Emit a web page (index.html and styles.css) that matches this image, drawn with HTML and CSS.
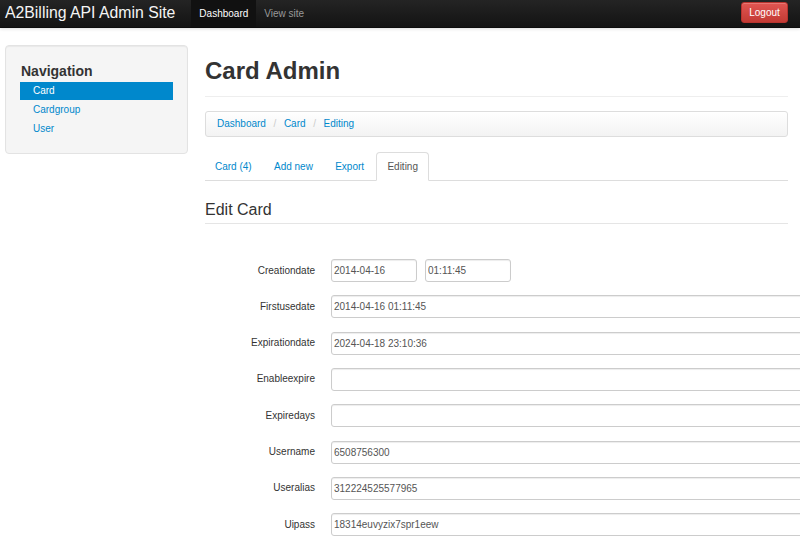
FILE: index.html
```html
<!DOCTYPE html>
<html lang="en">
<head>
<meta charset="utf-8">
<title>Card Admin - A2Billing API Admin Site</title>
<link rel="stylesheet" href="styles.css">
</head>
<body>
<div class="navbar">
  <a class="brand" href="#">A2Billing API Admin Site</a>
  <ul class="nav">
    <li class="active"><a href="#">Dashboard</a></li>
    <li><a href="#">View site</a></li>
  </ul>
  <a class="btn-danger" href="#">Logout</a>
</div>

<div class="container">
  <div class="sidebar">
    <div class="well">
      <h4 class="nav-header">Navigation</h4>
      <ul class="nav-list">
        <li class="active"><a href="#">Card</a></li>
        <li><a href="#">Cardgroup</a></li>
        <li><a href="#">User</a></li>
      </ul>
    </div>
  </div>

  <div class="main">
    <div class="page-header">
      <h1>Card Admin</h1>
    </div>

    <ul class="breadcrumb">
      <li><a href="#">Dashboard</a><span class="divider">/</span></li>
      <li><a href="#">Card</a><span class="divider">/</span></li>
      <li><a href="#">Editing</a></li>
    </ul>

    <ul class="nav-tabs">
      <li><a href="#">Card (4)</a></li>
      <li><a href="#">Add new</a></li>
      <li><a href="#">Export</a></li>
      <li class="active"><a href="#">Editing</a></li>
    </ul>

    <form class="form-horizontal">
      <h3 class="legend">Edit Card</h3>
      <div class="fields">
        <div class="control-group">
          <label class="control-label">Creationdate</label>
          <div class="controls">
            <input class="input input-small" type="text" value="2014-04-16">
            <input class="input input-small" type="text" value="01:11:45">
          </div>
        </div>
        <div class="control-group">
          <label class="control-label">Firstusedate</label>
          <div class="controls"><input class="input input-wide" type="text" value="2014-04-16 01:11:45"></div>
        </div>
        <div class="control-group">
          <label class="control-label">Expirationdate</label>
          <div class="controls"><input class="input input-wide" type="text" value="2024-04-18 23:10:36"></div>
        </div>
        <div class="control-group">
          <label class="control-label">Enableexpire</label>
          <div class="controls"><input class="input input-wide" type="text" value=""></div>
        </div>
        <div class="control-group">
          <label class="control-label">Expiredays</label>
          <div class="controls"><input class="input input-wide" type="text" value=""></div>
        </div>
        <div class="control-group">
          <label class="control-label">Username</label>
          <div class="controls"><input class="input input-wide" type="text" value="6508756300"></div>
        </div>
        <div class="control-group">
          <label class="control-label">Useralias</label>
          <div class="controls"><input class="input input-wide" type="text" value="312224525577965"></div>
        </div>
        <div class="control-group">
          <label class="control-label">Uipass</label>
          <div class="controls"><input class="input input-wide" type="text" value="18314euvyzix7spr1eew"></div>
        </div>
      </div>
    </form>
  </div>
</div>
</body>
</html>
```

FILE: styles.css
```css
html, body {
  margin: 0;
  padding: 0;
  overflow-x: hidden;
}
body {
  font-family: "Liberation Sans", Arial, sans-serif;
  font-size: 10px;
  line-height: 14px;
  color: #333333;
  background: #ffffff;
}
a {
  color: #0088cc;
  text-decoration: none;
}
ul {
  list-style: none;
  margin: 0;
  padding: 0;
}

/* navbar */
.navbar {
  display: flex;
  align-items: flex-start;
  height: 28px;
  background: linear-gradient(#242424, #131313);
  border-bottom: 1px solid #0c0c0c;
  box-shadow: 0 1px 3px rgba(0,0,0,0.15);
  box-sizing: border-box;
}
.brand {
  color: #f4f4f4;
  font-size: 15.8px;
  line-height: 25px;
  padding-left: 5px;
  white-space: nowrap;
}
.nav {
  display: flex;
  margin-left: 16px;
}
.nav li a {
  display: block;
  padding: 0 8px;
  line-height: 27px;
  color: #999999;
}
.nav li.active a {
  color: #ffffff;
  background: #111111;
}
.btn-danger {
  margin-left: auto;
  margin-right: 12px;
  margin-top: 2px;
  width: 47px;
  height: 21px;
  line-height: 19px;
  text-align: center;
  box-sizing: border-box;
  font-size: 10px;
  color: #ffffff;
  background: linear-gradient(#e15652, #c33a34);
  border: 1px solid #b8332e;
  border-radius: 3px;
  box-shadow: inset 0 1px 0 rgba(255,255,255,0.2);
}

/* layout */
.container {
  display: flex;
  align-items: flex-start;
  padding: 17px 12px 0 5px;
  gap: 17px;
}
.sidebar {
  flex: 0 0 183px;
}
.main {
  flex: 1 1 auto;
  min-width: 0;
}

/* sidebar well */
.well {
  background: #f5f5f5;
  border: 1px solid #e3e3e3;
  border-radius: 4px;
  padding: 16px 14px 15px;
  box-shadow: inset 0 1px 1px rgba(0,0,0,0.05);
}
.nav-header {
  margin: 0 0 2px 1px;
  font-size: 14px;
  line-height: 18px;
  font-weight: bold;
  color: #333333;
}
.nav-list li a {
  display: block;
  padding: 3px 13px 2px;
  line-height: 14px;
}
.nav-list li.active a {
  padding: 2px 13px;
  color: #ffffff;
  background: #0088cc;
}

/* main */
.page-header {
  margin: 11px 0 14px;
  padding-bottom: 10px;
  border-bottom: 1px solid #eeeeee;
}
.page-header h1 {
  margin: 0;
  font-size: 24px;
  line-height: 30px;
  font-weight: bold;
  color: #333333;
}
.breadcrumb {
  display: flex;
  padding: 5px 11px;
  line-height: 14px;
  background: linear-gradient(#ffffff, #f3f3f3);
  border: 1px solid #dddddd;
  border-radius: 3px;
  box-shadow: inset 0 1px 0 #ffffff;
  margin: 0 0 15px;
}
.breadcrumb .divider {
  color: #cccccc;
  padding: 0 7.6px;
}

/* tabs */
.nav-tabs {
  display: flex;
  border-bottom: 1px solid #dddddd;
  margin: 0 0 19px;
}
.nav-tabs li {
  margin-bottom: -1px;
  margin-right: 2.3px;
}
.nav-tabs li a {
  display: block;
  padding: 7px 9px 6px;
  line-height: 14px;
  border: 1px solid transparent;
  border-radius: 4px 4px 0 0;
}
.nav-tabs li.active a {
  padding: 7px 10px 6px;
  color: #555555;
  background: #ffffff;
  border-color: #dddddd #dddddd transparent;
}

/* form */
.legend {
  margin: 0;
  font-size: 16px;
  line-height: 20px;
  font-weight: normal;
  color: #333333;
  padding-bottom: 3px;
  border-bottom: 1px solid #e5e5e5;
}
.fields {
  padding-top: 35px;
}
.control-group {
  display: flex;
  align-items: center;
  margin-bottom: 13.33px;
}
.control-label {
  flex: 0 0 110px;
  text-align: right;
  margin-right: 16px;
  color: #333333;
}
.controls {
  display: flex;
  gap: 8px;
}
.input {
  box-sizing: border-box;
  height: 23px;
  padding: 0 2px;
  font-family: "Liberation Sans", Arial, sans-serif;
  font-size: 10px;
  color: #555555;
  background: #ffffff;
  border: 1px solid #cccccc;
  border-radius: 3px;
  box-shadow: inset 0 1px 1px rgba(0,0,0,0.075);
  margin: 0;
  outline: none;
}
.input-small {
  width: 86px;
}
.input-wide {
  width: 560px;
}
```
